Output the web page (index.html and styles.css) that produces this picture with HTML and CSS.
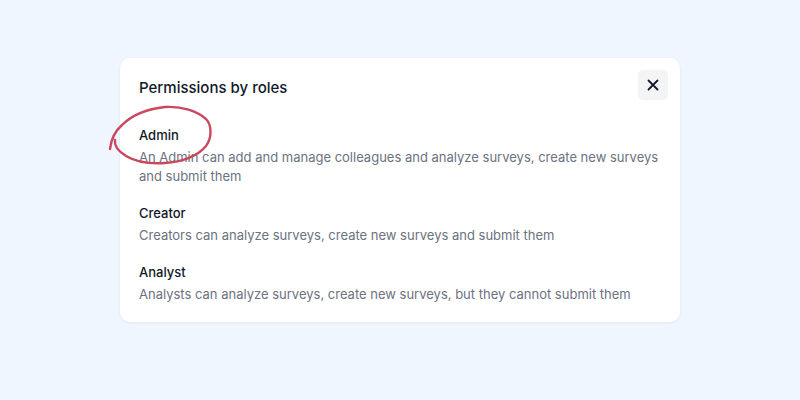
FILE: index.html
```html
<!DOCTYPE html>
<html lang="en">
<head>
  <meta charset="UTF-8">
  <title>Permissions by roles</title>
  <link rel="stylesheet" href="styles.css">
</head>
<body>

  <div class="modal">
    <div class="modal-header">
      <h2>Permissions by roles</h2>
      <button class="close" aria-label="Close">
        <svg width="14" height="14" viewBox="0 0 14 14">
          <path d="M2.5 2.5L11.5 11.5M11.5 2.5L2.5 11.5" stroke="#111827" stroke-width="1.8" stroke-linecap="round"/>
        </svg>
      </button>
    </div>

    <div class="roles">
      <div class="role">
        <div class="role-name">Admin</div>
        <p>An Admin can add and manage colleagues and analyze surveys, create new surveys and submit them</p>
      </div>
      <div class="role">
        <div class="role-name">Creator</div>
        <p>Creators can analyze surveys, create new surveys and submit them</p>
      </div>
      <div class="role">
        <div class="role-name">Analyst</div>
        <p>Analysts can analyze surveys, create new surveys, but they cannot submit them</p>
      </div>
    </div>

    <!-- hand-drawn highlight ring -->
    <svg class="scribble" width="120" height="70" viewBox="0 0 120 70">
      <path d="M8 47 C9 38 12 30 20 23 C30 13 45 7 63 5 C80 4 95 9 104 17 C110 23 110 36 104 44 C96 54 80 60 63 61 C48 62 34 60 24 54 C16 49 12 44 13 38"
            fill="none" stroke="#c9485e" stroke-width="2.4" stroke-linecap="round"/>
    </svg>
  </div>

</body>
</html>
```

FILE: styles.css
```css
body {
  margin: 0;
  background-color: #eff6ff;
  font-family: Inter, "Noto Sans", sans-serif;
  color: #111827;
  height: 400px;
  display: flex;
  justify-content: center;
  align-items: flex-start;
}
.modal {
  position: relative;
  margin-top: 58px;
  width: 560px;
  box-sizing: border-box;
  background-color: #fff;
  border-radius: 10px;
  padding: 12px 12px 18px 19px;
  box-shadow: 0 1px 3px rgba(30, 60, 120, 0.08);
}
.modal-header {
  display: flex;
  justify-content: space-between;
  align-items: center;
}
.modal-header h2 {
  margin: 5px 0 0;
  font-size: 15px;
  font-weight: 500;
  line-height: 24px;
}
.close {
  width: 30px;
  height: 30px;
  border: none;
  border-radius: 5px;
  background-color: #f3f4f6;
  display: flex;
  align-items: center;
  justify-content: center;
  padding: 0;
  cursor: pointer;
}
.roles {
  display: flex;
  flex-direction: column;
  gap: 17px;
  margin-top: 25px;
}
.role-name {
  font-size: 13px;
  font-weight: 500;
  line-height: 20px;
  margin-bottom: 3px;
}
.role p {
  margin: 0;
  font-size: 13px;
  line-height: 19px;
  color: #6b7280;
  padding-right: 8px;
}
.scribble {
  position: absolute;
  left: -18px;
  top: 44px;
}
```
